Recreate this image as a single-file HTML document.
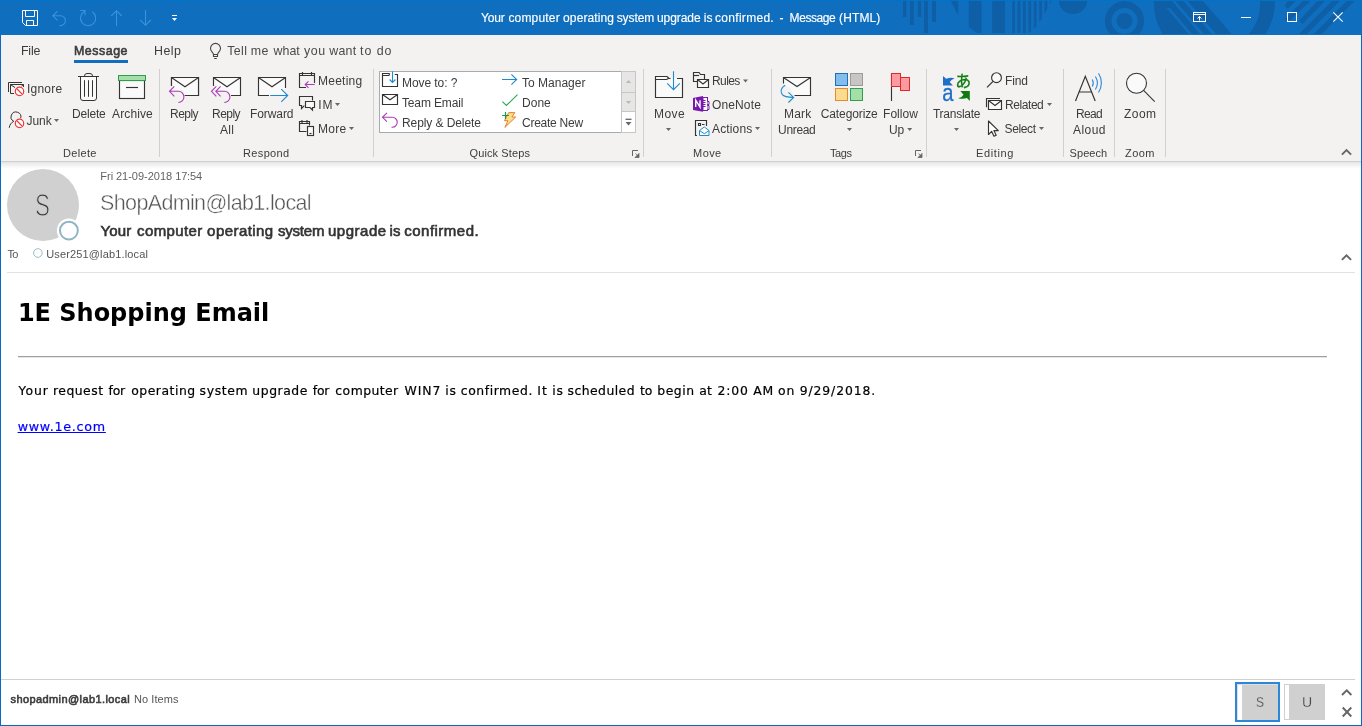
<!DOCTYPE html>
<html lang="en">
<head>
<meta charset="utf-8">
<title>Your computer operating system upgrade is confirmed. - Message (HTML)</title>
<style>
html,body{margin:0;padding:0;background:#fff;}
body{width:1362px;height:726px;overflow:hidden;font-family:"Liberation Sans",sans-serif;}
#win{will-change:transform;position:relative;width:1362px;height:726px;overflow:hidden;background:#fff;}
#win div,#win span,#win svg,#win a,#win h1,#win p,#win hr{position:absolute;margin:0;padding:0;}
.t{white-space:pre;display:block;font-weight:400;}
.lnk{text-decoration:underline;}
.w{left:0;top:0;}
.f1{font-size:12px;line-height:16px;color:#fff;-webkit-text-stroke:0.15px currentColor;}
.f2{font-size:12.4px;line-height:17px;color:#3c3c3c;}
.f3{font-size:12.4px;line-height:17px;color:#3c3c3c;-webkit-text-stroke:0.6px currentColor;}
.f4{font-size:12.4px;line-height:17px;color:#4a4a4a;}
.f5{font-size:12px;line-height:16px;color:#3c3c3c;}
.f6{font-size:11px;line-height:15px;color:#3c3c3c;}
.f7{font-size:11px;line-height:15px;color:#636363;}
.f8{font-size:21.5px;line-height:29px;color:#555;-webkit-text-stroke:0.4px #fff;}
.f9{font-size:15px;line-height:20px;color:#333;-webkit-text-stroke:0.62px currentColor;}
.f10{font-size:11px;line-height:15px;color:#555;}
.f11{font-size:31px;line-height:41px;color:#3c3c3c;-webkit-text-stroke:1.1px #d0d0d0;}
.f12{font-size:24px;line-height:32px;color:#000;font-weight:700;font-family:"DejaVu Sans", "Liberation Sans", sans-serif;}
.f13{font-size:12.4px;line-height:17px;color:#000;font-family:"DejaVu Sans", "Liberation Sans", sans-serif;-webkit-text-stroke:0.2px currentColor;}
.f14{font-size:12.7px;line-height:17px;color:#0000ff;font-family:"DejaVu Sans", "Liberation Sans", sans-serif;-webkit-text-stroke:0.2px currentColor;}
.f15{font-size:11px;line-height:15px;color:#3c3c3c;-webkit-text-stroke:0.6px currentColor;}
.f16{font-size:15.5px;line-height:21px;color:#3c3c3c;-webkit-text-stroke:0.3px #d0d0d0;}
#titlebar{left:0;top:0;width:1362px;height:35px;background:#106ebe;}
#ribbon{left:0;top:35px;width:1362px;height:126px;background:#f3f2f1;}
#ribbon-edge{left:0;top:161px;width:1362px;height:1px;background:#d2d0ce;}
#header{left:0;top:162px;width:1362px;height:111px;background:#fff;}
#ribbon-shadow{left:0;top:0;width:1362px;height:7px;background:linear-gradient(#e5e5e5,#f1f1f1 40%,#fff);}
.vsep{top:34px;width:1px;height:88px;background:#d2d0ce;}
#tabline{left:74px;top:25px;width:54px;height:3px;background:#106ebe;}
#qs{left:379px;top:36px;width:243px;height:62px;box-sizing:border-box;border:1px solid #a6abb0;background:#fff;}
#avatar{left:7px;top:7px;width:72px;height:72px;border-radius:50%;background:#d0d0d0;}
#hdrline{left:7px;top:110px;width:1348px;height:1px;background:#e1e1e1;}
#body{left:0;top:273px;width:1362px;height:406px;background:#fff;}
#win hr{left:18px;top:83px;width:1309px;height:1px;background:#a0a0a0;border:0;border-bottom:1px solid #e6e6e6;}
#status{left:0;top:679px;width:1362px;height:47px;background:#fff;}
#statline{left:1px;top:0;width:1354px;height:1px;background:#d0d0d0;}
#bl{left:0;top:35px;width:1px;height:691px;background:#0a69c3;}
#br{left:1361px;top:35px;width:1px;height:691px;background:#0a69c3;}
#bb{left:0;top:725px;width:1362px;height:1px;background:#0a69c3;}
</style>
</head>
<body>
<div id="win">
<div id="titlebar">
<svg id="titlesvg" style="left:0;top:0" width="1362" height="35" viewBox="0 0 1362 35">
<g fill="#0f5fa6">
<rect x="903" y="1" width="3.4" height="16"/>
<rect x="910" y="1" width="3.8" height="24"/>
<rect x="917.8" y="1" width="3.3" height="16"/>
<rect x="924" y="1" width="4" height="32"/>
<rect x="932" y="1" width="4" height="21"/>
<path d="M950.8 1H958.2V15.5Z"/>
<path d="M968.8 1H981.6V33H977L968.8 27Z"/>
<rect x="992.2" y="1" width="12.8" height="32"/>
<g id="stripes">
<path d="M1012.2 1h2.8v32h-2.8zM1017.6 1h2.8v32h-2.8zM1023 1h2.8v32h-2.8zM1028.4 1h2.8v30l-2.8 2zM1033.8 1h2.8v25l-2.8 3zM1039.2 1h2.8v17l-2.8 4zM1044.6 1h2.8v7l-2.8 6zM1050 1h1.6l-1.6 4z"/>
</g>
<path d="M1059 1A14 13 0 0 0 1087 1Z"/>
<path d="M1124.5 1a20 20 0 0 0-14.9 33h29.8a20 20 0 0 0-14.9-33zM1124.5 8a13 13 0 0 1 0 26a13 13 0 0 1 0-26z" fill-rule="evenodd"/>
<circle cx="1124.5" cy="21" r="8"/>
<path d="M1153.8 1H1203L1231.500 34H1162.500A61 61 0 0 1 1153.800 1Z"/>
<path d="M1260 1H1275A61 61 0 0 1 1265.500 34H1249A46 46 0 0 0 1260 1Z"/>
<path d="M1288 1H1295.800L1287.700 9L1284.500 5.500ZM1302.700 1H1310.400L1288 22L1284.800 19ZM1317.400 1H1325L1302.400 24L1299.200 20.500ZM1332 1H1339.800L1306.800 34H1299ZM1346.800 1H1354.600L1321.600 34H1313.800Z"/>
</g>
<path d="M1166.500 8H1170L1192 34H1188.500ZM1172 1H1175.500L1204 34H1200ZM1183.600 1H1187.500L1216 34H1211.600Z" fill="#106ebe"/>
<rect x="0" y="0" width="1362" height="1" fill="#0072c8"/>
<!-- save -->
<g fill="none" stroke="#fff" stroke-width="1">
<path d="M22.500 10.500H37.500V25.500H25.500L22.500 22.500Z"/>
<path d="M25.500 10.500V16.500H34.500V10.500"/>
<path d="M26.500 25.500V20.500H33.500V25.500"/>
</g>
<!-- undo / redo / up / down (disabled) -->
<g fill="none" stroke="#3c92dc" stroke-width="1.1">
<path d="M57.500 11.200L52.800 15.800L57.500 20.400M52.800 15.800H60.500A4.900 4.900 0 0 1 60.500 25.600H59.500"/>
<path d="M80.300 10.500H85V15.300M85 11.200A7.600 7.600 0 1 0 92.300 11.800"/>
<path d="M116.500 26V10.800M111.200 16L116.500 10.700L121.800 16"/>
<path d="M145.500 10V25.200M140.200 20L145.500 25.300L150.800 20"/>
</g>
<!-- customize -->
<rect x="172" y="15" width="5" height="1" fill="#fff"/>
<path d="M172 18h5l-2.500 3z" fill="#fff"/>
<!-- window controls -->
<g fill="none" stroke="#fff" stroke-width="1">
<rect x="1193.500" y="12.500" width="12" height="9"/>
<path d="M1193.500 14.500H1205.500M1199.500 20.500V16.500M1197.500 18.500L1199.500 16.500L1201.500 18.500"/>
<path d="M1241 17.500H1251"/>
<rect x="1287.500" y="12.500" width="9" height="9"/>
<path d="M1333.300 12.300L1342.700 21.700M1342.700 12.300L1333.300 21.700" stroke-width="1.100"/>
</g>
</svg>
<span class="t f1" style="left:481.02px;top:10px;letter-spacing:-0.14px;">Your </span>
<span class="t f1" style="left:508.45px;top:10px;letter-spacing:0.17px;">computer </span>
<span class="t f1" style="left:563.06px;top:10px;letter-spacing:0.12px;">operating </span>
<span class="t f1" style="left:616.73px;top:10px;letter-spacing:-0.1px;">system </span>
<span class="t f1" style="left:657.02px;top:10px;letter-spacing:-0.07px;">upgrade is </span>
<span class="t f1" style="left:715.05px;top:10px;letter-spacing:0.29px;">confirmed.  </span>
<span class="t f1" style="left:779.42px;top:10px;">-  </span>
<span class="t f1" style="left:789.62px;top:10px;letter-spacing:-0.43px;">Message </span>
<span class="t f1" style="left:839.01px;top:10px;letter-spacing:0.13px;">(HTML)</span>
</div>
<div id="ribbon">
<div id="tabline"></div>
<div class="vsep" style="left:159px"></div>
<div class="vsep" style="left:373px"></div>
<div class="vsep" style="left:643px"></div>
<div class="vsep" style="left:771px"></div>
<div class="vsep" style="left:926px"></div>
<div class="vsep" style="left:1063px"></div>
<div class="vsep" style="left:1114px"></div>
<div class="vsep" style="left:1165px"></div>
<div id="qs"></div>
<svg id="rib1" style="left:0;top:0" width="645" height="126" viewBox="0 35 645 126">
<!-- tell me bulb -->
<g fill="none" stroke="#454545" stroke-width="1.100">
<path d="M213.500 54.500C213 52 210.500 51.200 210.500 48.400A5 5 0 0 1 220.500 48.400C220.500 51.200 218 52 217.500 54.500V56.500H213.500ZM213.500 54.500H217.500M214.200 58.500H216.800"/>
</g>
<!-- Ignore -->
<g fill="none" stroke="#353433" stroke-width="1">
<path d="M8.500 92V82.500H22"/>
<path d="M14 93.500H10.500V84.500H23.500V87"/>
<path d="M10.500 84.700L15 87.500M23.500 84.700L21.500 86"/>
</g>
<circle cx="19.500" cy="91.400" r="4.200" fill="#fff" stroke="#e8383d" stroke-width="1.200"/>
<path d="M16.600 88.500L22.400 94.300" stroke="#e8383d" stroke-width="1.200"/>
<!-- Junk -->
<g fill="none" stroke="#353433" stroke-width="1">
<path d="M20.700 118.200A4.900 4.900 0 1 0 13.800 121.300C11.300 122.500 9.600 124.800 9.200 127.800"/>
</g>
<circle cx="19.500" cy="123.400" r="4.200" fill="#fff" stroke="#e8383d" stroke-width="1.200"/>
<path d="M16.600 120.500L22.400 126.300" stroke="#e8383d" stroke-width="1.200"/>
<path class="dd" d="M54 119h5l-2.500 3z" fill="#666"/>
<!-- Delete (trash) -->
<g fill="none" stroke="#353433" stroke-width="1">
<path d="M80.500 76.500V98A2.500 2.500 0 0 0 83 100.500H94A2.500 2.500 0 0 0 96.500 98V76.500Z" fill="#fafafa"/>
<path d="M78 76.500H99M84.500 76.500V76A2.500 2.500 0 0 1 87 73.500H90A2.500 2.500 0 0 1 92.500 76V76.500"/>
<path d="M84.500 80.200V96.800M88.500 80.200V96.800M92.500 80.200V96.800"/>
</g>
<!-- Archive -->
<rect x="119.500" y="80.500" width="25" height="18" fill="#fafafa" stroke="#353433" stroke-width="1.15"/>
<rect x="118.500" y="75.500" width="27" height="5" fill="#a5dfa8" stroke="#2f9e4f"/>
<path d="M126 87.500H138" stroke="#353433" stroke-width="1.15" fill="none"/>
<!-- Reply -->
<path d="M171.500 86V77.500H198.500V95.500H184.800" fill="none" stroke="#353433" stroke-width="1.15"/>
<path d="M172 78H198V95H185L183 90H172Z" fill="#fafafa"/>
<path d="M171.500 86V77.500H198.500V95.500H184.800M171.800 77.800L185 86.700L198.200 77.800" fill="none" stroke="#353433" stroke-width="1.15"/>
<path d="M174.300 86.300L169.500 91.300L174.300 96.300M169.500 91.300H178.300A5.600 5.600 0 0 1 178.300 102.500" fill="none" stroke="#a93fb5" stroke-width="1.100"/>
<!-- Reply all -->
<path d="M214 78H240V95H231L229 90H214Z" fill="#fafafa"/>
<path d="M213.500 86V77.500H240.500V95.500H231M213.800 77.800L227 86.700L240.200 77.800" fill="none" stroke="#353433" stroke-width="1.15"/>
<path d="M216.300 86.300L211.500 91.300L216.300 96.300M220.600 86.300L215.800 91.300L220.600 96.300M215.800 91.300H224.300A5.600 5.600 0 0 1 224.300 102.500" fill="none" stroke="#a93fb5" stroke-width="1.100"/>
<!-- Forward -->
<path d="M259 78H285V95H259Z" fill="#fafafa"/>
<path d="M269 95.500H258.500V77.500H285.500V88M258.800 77.800L272 86.700L285.200 77.800" fill="none" stroke="#353433" stroke-width="1.15"/>
<path d="M270.200 95.500H287.600M281.300 89.200L287.700 95.500L281.300 101.800" fill="none" stroke="#1e8bcd" stroke-width="1.100"/>
<!-- Meeting -->
<g fill="none" stroke="#353433" stroke-width="1.15">
<path d="M306 87.500H299.500V73.500H314.500V83M299.500 75.500H314.500M302.500 72V75M311.500 72V75"/>
</g>
<path d="M314.700 84.500H305.200M308.500 81.300L305.200 84.500L308.500 87.800" fill="none" stroke="#a93fb5" stroke-width="1.100"/>
<!-- IM -->
<g fill="none" stroke="#353433" stroke-width="1.15">
<path d="M312.500 100.500V96.500H299.500V105.500H301.500V108.500L304.300 105.600"/>
<path d="M305.500 101.500H314.500V107.500H312.500V110L310 107.500H305.500Z" fill="#fafafa"/>
</g>
<path class="dd" d="M335 103h5l-2.500 3z" fill="#666"/>
<!-- More -->
<g fill="none" stroke="#353433" stroke-width="1.15">
<path d="M306.500 131.500H299.500V121.500H309.500V125.500M299.500 123.500H309.500M302 120V123M307 120V123"/>
<rect x="307.500" y="126.500" width="6" height="9" fill="#fafafa"/>
<path d="M309.500 133.500H311.500"/>
</g>
<path class="dd" d="M349 127h5l-2.500 3z" fill="#666"/>
<!-- Quick steps icons -->
<g fill="none" stroke="#353433" stroke-width="1.15">
<path d="M390 74.500L389 73.500H382.500V86.500H397.500V74.500H394.800M382.500 75.500H388.500L390 74.500"/>
<path d="M382.500 94.500H397.500V104.500H382.500ZM382.800 94.800L390 99.800L397.200 94.800"/>
</g>
<path d="M392.500 71.500V82.300M389.600 79.500L392.500 82.400L395.400 79.500" fill="none" stroke="#1e8bcd" stroke-width="1.100"/>
<path d="M387 112.900L382.500 117.300L387 121.700M382.500 117.300H392.300A4.950 4.950 0 0 1 392.300 127.200H391.500" fill="none" stroke="#a93fb5" stroke-width="1.100"/>
<path d="M502 79.500H516.600M511.400 74.300L516.700 79.500L511.400 84.700" fill="none" stroke="#1e8bcd" stroke-width="1.100"/>
<path d="M502.400 101.600L506.400 105.500L517.500 94.600" fill="none" stroke="#2ea653" stroke-width="1.100"/>
<path d="M508.700 112.600H514.800L511.900 117H515.700L504.900 127.400L507.900 120.700H504.500Z" fill="#f9de8c" stroke="#e8802a" stroke-width="1" stroke-linejoin="round"/>
<path d="M502 115.500H509M505.500 112V119" fill="none" stroke="#1a9a4a" stroke-width="1.200"/>
<!-- quick steps scroll buttons -->
<rect x="621.500" y="71.500" width="14" height="21" fill="#e6e6e6" stroke="#c8c6c4"/>
<rect x="621.500" y="92.500" width="14" height="19" fill="#e6e6e6" stroke="#c8c6c4"/>
<rect x="621.500" y="111.500" width="14" height="21" fill="#fff" stroke="#c8c6c4"/>
<path d="M626 83h5l-2.500-3z" fill="#b8b8b8"/>
<path d="M626 101h5l-2.500 3z" fill="#b8b8b8"/>
<path d="M625.500 119.300H631.500" stroke="#666" stroke-width="1.300" fill="none"/>
<path d="M625.500 122h6l-3 3.500z" fill="#666"/>
<!-- dialog launcher -->
<path d="M632.500 156V150.500H638" fill="none" stroke="#666"/>
<path d="M639 153.500V157.500H635ZM635.500 153.500L638.500 156.500" fill="#666" stroke="#666" stroke-width=".8"/>
</svg>
<svg id="rib2" style="left:645px;top:0" width="717" height="126" viewBox="645 35 717 126">
<!-- Move -->
<path d="M655.500 76.500H667L669 78.500H682.500V97.500H655.500Z" fill="#fafafa"/>
<g fill="none" stroke="#353433" stroke-width="1.15">
<path d="M670.500 78.500H669L667 76.500H655.500V97.500H682.500V78.500H677M655.500 79.500H666.500L668.500 78.500"/>
</g>
<path d="M673.500 71.300V89.600M667.200 83.400L673.500 89.700L679.800 83.400" fill="none" stroke="#1e8bcd" stroke-width="1.100"/>
<path class="dd" d="M666 128h5l-2.500 3z" fill="#666"/>
<!-- Rules -->
<g fill="none" stroke="#353433" stroke-width="1.15">
<path d="M697 81.500H693.500V72.500H699L700.500 74.500H704.500V79"/>
<path d="M693.500 75.500H699"/>
<path d="M697.500 79.500H708.500V87.500H697.500Z" fill="#fafafa"/>
<path d="M697.800 79.800L703 84L708.200 79.800"/>
</g>
<path class="dd" d="M743 79.500h5l-2.500 3z" fill="#666"/>
<!-- OneNote -->
<rect x="703" y="97.500" width="4.500" height="13" fill="#fff" stroke="#7719aa"/>
<path d="M703 100.500H705.500M703 102.500H705.500M703 104.500H705.500M703 106.500H705.500" stroke="#7719aa" fill="none"/>
<path d="M707.500 101.500H709V104.500H707.500M707.500 105.500H709V109.500H707.500" stroke="#7719aa" fill="#fff"/>
<path d="M693 98L703 96V111.800L693 110Z" fill="#7719aa"/>
<path d="M695.700 107V100.200L700 107V100.200" fill="none" stroke="#fff" stroke-width="1.400"/>
<!-- Actions -->
<g fill="none" stroke="#353433" stroke-width="1.15">
<path d="M697 135.500H695.500V120.500H706.500V126"/>
<path d="M698.500 123.500H700.500V125.500H698.500ZM702 124.500H704.500"/>
</g>
<path d="M699.500 135.500V130.500L704.300 127L709 130.500V135.500Z" fill="#fff" stroke="#1e8bcd"/>
<path d="M699.800 130.800L704.300 133.700L708.800 130.800" fill="none" stroke="#1e8bcd"/>
<path class="dd" d="M755 127h5l-2.500 3z" fill="#666"/>
<!-- Mark unread -->
<path d="M784 78H810V95H794L790 88L784 84Z" fill="#fafafa"/>
<path d="M783.500 83.500V77.500H810.500V95.500H794.500M783.800 77.800L797 86.600L810.200 77.800" fill="none" stroke="#353433" stroke-width="1.15"/>
<path d="M785.200 85.200C781.200 87.500 779.800 91.500 782.300 94.700C784.300 97.200 788 97.400 793.300 97.400M788.400 92.400L793.600 97.400L788.400 102.500" fill="none" stroke="#1e8bcd" stroke-width="1.100"/>
<!-- Categorize -->
<rect x="835.500" y="73.500" width="12" height="12" fill="#83bdec" stroke="#1c6fb8"/>
<rect x="850.500" y="73.500" width="12" height="12" fill="#c8c6c4" stroke="#9d9b99"/>
<rect x="835.500" y="88.500" width="12" height="12" fill="#f9dc90" stroke="#e88a2a"/>
<rect x="850.500" y="88.500" width="12" height="12" fill="#a5dfa8" stroke="#2f9e4f"/>
<path class="dd" d="M847 128h5l-2.500 3z" fill="#666"/>
<!-- Follow up -->
<path d="M891.500 73.500V101" stroke="#353433" stroke-width="1.15" fill="none"/>
<rect x="900.500" y="77.500" width="9" height="13" fill="#fb9aa0" stroke="#e02a2a"/>
<rect x="891.500" y="73.500" width="9" height="13" fill="#fb9aa0" stroke="#e02a2a"/>
<path class="dd" d="M907.200 128h5l-2.500 3z" fill="#666"/>
<!-- dialog launcher -->
<path d="M915.500 156V150.500H921" fill="none" stroke="#666"/>
<path d="M922 153.500V157.500H918ZM918.500 153.500L921.500 156.500" fill="#666" stroke="#666" stroke-width=".8"/>
<!-- Translate -->
<path d="M943 76L946.200 78.800Q950 77.300 954.600 78.200Q951 79.500 949.700 82.100L952.900 85.600H943Z" fill="#1e6fc8"/>
<text transform="translate(942.2 100.800) scale(.86 1)" font-family="'Liberation Sans',sans-serif" font-size="23.500" fill="#1e6fc8" stroke="#1e6fc8" stroke-width=".3">a</text>
<text x="955.300" y="87.300" font-family="'Noto Sans CJK JP','Noto Sans CJK SC','Liberation Sans',sans-serif" font-size="16" fill="#107c10" stroke="#107c10" stroke-width=".35">あ</text>
<path d="M969.800 91H960.300L963.500 94.700Q962 97.500 958.200 98.300Q963 99.500 967 98L969.800 101Z" fill="#107c10"/>
<path class="dd" d="M954 128h5l-2.500 3z" fill="#666"/>
<!-- Find -->
<circle cx="996.500" cy="77.700" r="4.900" fill="#fafafa" stroke="#353433" stroke-width="1.15"/>
<path d="M993 81.300L987 87.300" stroke="#353433" stroke-width="1.15" fill="none"/>
<!-- Related -->
<g fill="none" stroke="#353433" stroke-width="1.15">
<path d="M986.500 107.300V98.500H1000"/>
<path d="M988.500 100.500H1001.500V109.500H988.500Z" fill="#fafafa"/>
<path d="M988.800 100.800L995 105.500L1001.200 100.800"/>
</g>
<path class="dd" d="M1047 103h5l-2.500 3z" fill="#666"/>
<!-- Select -->
<path d="M988.500 121V134.500L991.700 131.400L994 136.200L996.200 135.200L993.900 130.600H998.300Z" fill="#fff" stroke="#353433" stroke-width="1.15" stroke-linejoin="round"/>
<path class="dd" d="M1039 127h5l-2.500 3z" fill="#666"/>
<!-- Read aloud -->
<path d="M1075.500 101L1085.300 76.300L1095.200 101M1079.200 92H1091.500" fill="none" stroke="#353433" stroke-width="1.200"/>
<g fill="none" stroke="#2b88d8" stroke-width="1.100">
<path d="M1092.300 79.500A7.300 7.300 0 0 1 1092.300 86.500"/>
<path d="M1095.400 76.500A12.300 12.300 0 0 1 1095.400 89.500"/>
<path d="M1098.500 73.300A17.500 17.500 0 0 1 1098.500 92.500"/>
</g>
<!-- Zoom -->
<circle cx="1136.500" cy="83.300" r="10" fill="#fafafa" stroke="#353433" stroke-width="1.100"/>
<path d="M1143.600 90.400L1154.700 101.600" stroke="#353433" stroke-width="1.100" fill="none"/>
<!-- collapse ribbon -->
<path d="M1341.900 154.700L1346.500 150.100L1351.100 154.700" fill="none" stroke="#666" stroke-width="1.900"/>
</svg>
<span class="t f2" style="left:21px;top:8px;letter-spacing:-0.22px;">File</span>
<span class="t f3" style="left:74px;top:8px;letter-spacing:0.53px;">Message</span>
<span class="t f2" style="left:154px;top:8px;letter-spacing:0.48px;">Help</span>
<div id="tellme" class="w"><span class="t f4" style="left:227.15px;top:8px;letter-spacing:0.43px;">Tell </span>
<span class="t f4" style="left:250.85px;top:8px;letter-spacing:0.25px;">me </span>
<span class="t f4" style="left:273.55px;top:8px;letter-spacing:0.02px;">what </span>
<span class="t f4" style="left:303.9px;top:8px;letter-spacing:0.68px;">you </span>
<span class="t f4" style="left:329.25px;top:8px;letter-spacing:0.22px;">want </span>
<span class="t f4" style="left:360.1px;top:8px;letter-spacing:0.9px;">to </span>
<span class="t f4" style="left:376.66px;top:8px;letter-spacing:0.9px;">do</span></div>
<span class="t f5" style="left:27px;top:46px;letter-spacing:0.22px;">Ignore</span>
<span class="t f5" style="left:26.45px;top:78px;letter-spacing:-0.01px;">Junk</span>
<span class="t f5" style="left:72.02px;top:71px;letter-spacing:-0.19px;">Delete</span>
<span class="t f5" style="left:112px;top:71px;letter-spacing:0.13px;">Archive</span>
<span class="t f5" style="left:170.02px;top:71px;letter-spacing:-0.52px;">Reply</span>
<span class="t f5" style="left:212.02px;top:71px;letter-spacing:-0.52px;">Reply</span>
<span class="t f5" style="left:220px;top:87px;letter-spacing:0.23px;">All</span>
<span class="t f5" style="left:250.02px;top:71px;letter-spacing:-0.08px;">Forward</span>
<span class="t f5" style="left:654.02px;top:71px;letter-spacing:0.44px;">Move</span>
<span class="t f5" style="left:784.02px;top:71px;letter-spacing:0.17px;">Mark</span>
<span class="t f5" style="left:778.08px;top:87px;letter-spacing:-0.33px;">Unread</span>
<span class="t f5" style="left:820.76px;top:71px;letter-spacing:-0.11px;">Categorize</span>
<span class="t f5" style="left:883.02px;top:71px;letter-spacing:0.03px;">Follow</span>
<span class="t f5" style="left:889.08px;top:87px;letter-spacing:-0.23px;">Up</span>
<span class="t f5" style="left:933px;top:71px;letter-spacing:-0.26px;">Translate</span>
<span class="t f5" style="left:1075.98px;top:71px;letter-spacing:-0.7px;">Read</span>
<span class="t f5" style="left:1073px;top:87px;letter-spacing:0.46px;">Aloud</span>
<span class="t f5" style="left:1124px;top:71px;letter-spacing:0.48px;">Zoom</span>
<span class="t f5" style="left:318.02px;top:38px;letter-spacing:0.24px;">Meeting</span>
<span class="t f5" style="left:318.34px;top:62px;letter-spacing:0.9px;">IM</span>
<span class="t f5" style="left:318.02px;top:86px;letter-spacing:0.31px;">More</span>
<span class="t f5" style="left:712.02px;top:38px;letter-spacing:-0.6px;">Rules</span>
<span class="t f5" style="left:712px;top:62px;letter-spacing:0.13px;">OneNote</span>
<span class="t f5" style="left:712px;top:86px;letter-spacing:0.14px;">Actions</span>
<span class="t f5" style="left:1005.02px;top:38px;letter-spacing:-0.12px;">Find</span>
<span class="t f5" style="left:1005.02px;top:62px;letter-spacing:-0.43px;">Related</span>
<span class="t f5" style="left:1004.51px;top:86px;letter-spacing:-0.35px;">Select</span>
<span class="t f5" style="left:402.02px;top:40px;letter-spacing:-0.07px;">Move to: ?</span>
<span class="t f5" style="left:402px;top:60px;letter-spacing:-0.15px;">Team Email</span>
<span class="t f5" style="left:402.02px;top:80px;letter-spacing:-0.09px;">Reply &amp; Delete</span>
<span class="t f5" style="left:522px;top:40px;letter-spacing:0.01px;">To Manager</span>
<span class="t f5" style="left:522.02px;top:60px;letter-spacing:0.01px;">Done</span>
<span class="t f5" style="left:521.96px;top:80px;letter-spacing:-0.24px;">Create New</span>
<span class="t f6" style="left:63.09px;top:111px;letter-spacing:0.31px;">Delete</span>
<span class="t f6" style="left:243.09px;top:111px;letter-spacing:0.33px;">Respond</span>
<span class="t f6" style="left:469.54px;top:111px;letter-spacing:0.11px;">Quick Steps</span>
<span class="t f6" style="left:693.09px;top:111px;letter-spacing:0.41px;">Move</span>
<span class="t f6" style="left:830px;top:111px;letter-spacing:-0.38px;">Tags</span>
<span class="t f6" style="left:976.09px;top:111px;letter-spacing:0.59px;">Editing</span>
<span class="t f6" style="left:1069.57px;top:111px;letter-spacing:0.06px;">Speech</span>
<span class="t f6" style="left:1125px;top:111px;letter-spacing:0.47px;">Zoom</span>
</div>
<div id="ribbon-edge"></div>
<div id="header">
<div id="ribbon-shadow"></div>
<div id="avatar"></div>
<svg id="hdrsvg" style="left:0;top:3px" width="1362" height="105" viewBox="0 165 1362 105">
<circle cx="68.900" cy="230.600" r="12" fill="#fff"/>
<circle cx="68.900" cy="230.600" r="8.900" fill="#fff" stroke="#8fb4c6" stroke-width="2"/>
<circle cx="37.900" cy="253" r="4.300" fill="#fff" stroke="#9bbccb" stroke-width="1"/>
<path d="M1341.900 259.900L1346.500 255.300L1351.100 259.900" fill="none" stroke="#666" stroke-width="1.900"/>
</svg>
<div id="date" class="w"><span class="t f7" style="left:100.19px;top:7px;letter-spacing:0.13px;">Fri </span>
<span class="t f7" style="left:116.03px;top:7px;letter-spacing:-0.02px;">21-09-2018 </span>
<span class="t f7" style="left:175.22px;top:7px;letter-spacing:-0.17px;">17:54</span></div>
<span class="t f8" style="left:100.1px;top:27px;letter-spacing:-0.65px;">ShopAdmin@lab1.local</span>
<div id="subject" class="w"><span class="t f9" style="left:100.41px;top:59px;letter-spacing:0.18px;">Your </span>
<span class="t f9" style="left:137.09px;top:59px;letter-spacing:0.36px;">computer </span>
<span class="t f9" style="left:207.11px;top:59px;letter-spacing:0.44px;">operating </span>
<span class="t f9" style="left:277.98px;top:59px;letter-spacing:-0.2px;">system </span>
<span class="t f9" style="left:328.03px;top:59px;letter-spacing:0.51px;">upgrade </span>
<span class="t f9" style="left:389.6px;top:59px;letter-spacing:0.09px;">is </span>
<span class="t f9" style="left:404.29px;top:59px;letter-spacing:0.48px;">confirmed.</span></div>
<span class="t f10" style="left:7.38px;top:85px;letter-spacing:-0.7px;">To</span>
<span class="t f10" style="left:46.26px;top:85px;letter-spacing:0.14px;">User251@lab1.local</span>
<span class="t f11" style="left:35.15px;top:23.4px;transform:scaleX(0.724);transform-origin:0 0;">S</span>
<div id="hdrline"></div>
</div>
<div id="body">
<h1 class="t f12" style="left:17.89px;top:24px;letter-spacing:-0.01px;">1E Shopping Email</h1>
<p class="w"><span class="t f13" style="left:18.6px;top:109px;letter-spacing:0.9px;">Your </span>
<span class="t f13" style="left:53px;top:109px;letter-spacing:0.49px;">request </span>
<span class="t f13" style="left:108.6px;top:109px;letter-spacing:-0.27px;">for </span>
<span class="t f13" style="left:131.27px;top:109px;letter-spacing:0.51px;">operating </span>
<span class="t f13" style="left:199.5px;top:109px;letter-spacing:0.67px;">system </span>
<span class="t f13" style="left:252.3px;top:109px;letter-spacing:0.56px;">upgrade </span>
<span class="t f13" style="left:312.8px;top:109px;letter-spacing:-0.27px;">for </span>
<span class="t f13" style="left:335.37px;top:109px;letter-spacing:0.44px;">computer </span>
<span class="t f13" style="left:404.53px;top:109px;letter-spacing:0.9px;">WIN7 </span>
<span class="t f13" style="left:445.21px;top:109px;letter-spacing:0.9px;">is </span>
<span class="t f13" style="left:460.77px;top:109px;letter-spacing:0.57px;">confirmed. </span>
<span class="t f13" style="left:537.37px;top:109px;letter-spacing:0.9px;">It </span>
<span class="t f13" style="left:552.3px;top:109px;letter-spacing:0.81px;">is </span>
<span class="t f13" style="left:567.5px;top:109px;letter-spacing:0.46px;">scheduled </span>
<span class="t f13" style="left:640px;top:109px;letter-spacing:-0.15px;">to </span>
<span class="t f13" style="left:657.3px;top:109px;letter-spacing:0.54px;">begin </span>
<span class="t f13" style="left:699.14px;top:109px;letter-spacing:0.25px;">at </span>
<span class="t f13" style="left:717.41px;top:109px;letter-spacing:0.9px;">2:00 </span>
<span class="t f13" style="left:753.3px;top:109px;letter-spacing:0.85px;">AM </span>
<span class="t f13" style="left:778.06px;top:109px;letter-spacing:0.9px;">on </span>
<span class="t f13" style="left:799.65px;top:109px;letter-spacing:0.9px;">9/29/2018.</span></p>
<a class="t f14 lnk" style="left:17.63px;top:145px;letter-spacing:0.72px;">www.1e.com</a>
<hr>
</div>
<div id="status">
<div id="statline"></div>
<div id="pb-s" style="left:1235px;top:3px;width:45px;height:40px;box-sizing:border-box;border:2px solid #2b88d8;background:#d0d0d0;"><div style="left:0;top:0;width:41px;height:36px;box-sizing:border-box;border:1px solid #e1dfdd;border-right:0;border-bottom:0"></div><div style="left:1px;top:1px;width:4px;height:35px;background:#fff"></div></div>
<div id="pb-u" style="left:1284px;top:5px;width:41px;height:36px;background:#d0d0d0;"><div style="left:0;top:0;width:5px;height:36px;background:#fff;box-sizing:border-box;border-left:1px solid #d0d0d0;border-top:1px solid #d0d0d0;border-bottom:1px solid #d0d0d0"></div></div>
<svg id="statsvg" style="left:1335px;top:3px" width="24" height="40" viewBox="1335 682 24 40">
<path d="M1342 695L1346.700 690.300L1351.400 695" fill="none" stroke="#666" stroke-width="1.900"/>
<path d="M1342.700 707.500L1351.300 716.500M1351.300 707.500L1342.700 716.500" fill="none" stroke="#666" stroke-width="1.900"/>
</svg>
<span class="t f15" style="left:10.5px;top:13px;letter-spacing:0.41px;">shopadmin@lab1.local</span>
<span class="t f10" style="left:134.09px;top:13px;letter-spacing:0.05px;">No Items</span>
<span class="t f16" style="left:1255.99px;top:12px;transform:scaleX(0.776);transform-origin:0 0;">S</span>
<span class="t f16" style="left:1302.09px;top:12px;transform:scaleX(0.906);transform-origin:0 0;">U</span>
</div>
<div id="bl"></div><div id="br"></div><div id="bb"></div>
</div>
</body>
</html>
